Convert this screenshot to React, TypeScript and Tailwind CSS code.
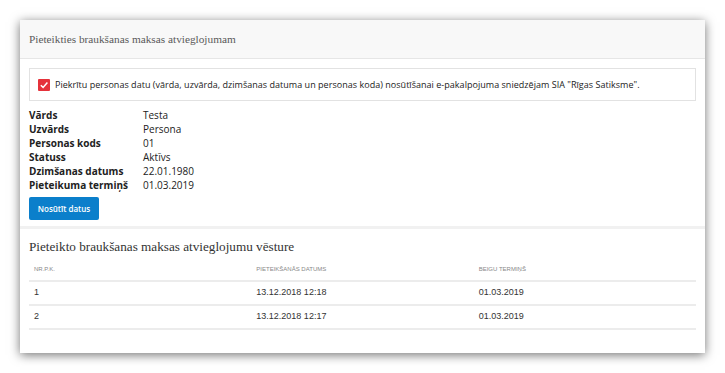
import React from "react";

const info: [string, string][] = [
  ["Vārds", "Testa"],
  ["Uzvārds", "Persona"],
  ["Personas kods", "01"],
  ["Statuss", "Aktīvs"],
  ["Dzimšanas datums", "22.01.1980"],
  ["Pieteikuma termiņš", "01.03.2019"],
];

const rows = [
  ["1", "13.12.2018 12:18", "01.03.2019"],
  ["2", "13.12.2018 12:17", "01.03.2019"],
];

export default function App() {
  return (
    <div className="w-[725px] h-[373px] bg-white p-[20px] overflow-hidden">
      <div className="w-[685px] h-[333px] bg-white shadow-[0_2px_10px_rgba(0,0,0,0.55)] flex flex-col">
        <div className="h-[39px] bg-[#f8f8f8] border-b border-[#e6e6e6] flex items-center pl-[9px]">
          <span className="text-[11.3px] text-[#5a5a5a] font-['Liberation_Serif',serif]">
            Pieteikties braukšanas maksas atvieglojumam
          </span>
        </div>
        <div className="px-[9px] pt-[9px]">
          <div className="h-[33px] border border-[#e2e2e2] flex items-center pl-[8px] gap-[5px]">
            <span className="w-[12px] h-[12px] bg-[#e5323b] rounded-[1px] flex items-center justify-center">
              <svg width="10" height="10" viewBox="0 0 10 10">
                <path d="M1.8 5.2 L4.1 7.4 L8.4 2.6" fill="none" stroke="white" strokeWidth="1.5" />
              </svg>
            </span>
            <span className="text-[9px] tracking-[0.03px] text-[#222] font-['Open_Sans',sans-serif]">
              Piekrītu personas datu (vārda, uzvārda, dzimšanas datuma un personas koda) nosūtīšanai e-pakalpojuma sniedzējam SIA "Rīgas Satiksme".
            </span>
          </div>
          <div className="mt-[7px] font-['Open_Sans',sans-serif] text-[10px] text-[#222]">
            {info.map(([k, v]) => (
              <div key={k} className="flex h-[14px] items-center">
                <span className="w-[114px] font-bold">{k}</span>
                <span>{v}</span>
              </div>
            ))}
          </div>
          <button className="mt-[5px] w-[70px] h-[23px] bg-[#0b7fcb] rounded-[2px] text-white text-[8px] font-semibold font-['Open_Sans',sans-serif]">
            Nosūtīt datus
          </button>
        </div>
        <div className="mt-[6px] h-[3px] bg-[#f1f1f1]" />
        <div className="px-[9px] pt-[8px]">
          <div className="h-[20px] flex items-center text-[13.2px] text-[#333] font-['Liberation_Serif',serif]">
            Pieteikto braukšanas maksas atvieglojumu vēsture
          </div>
          <div className="mt-[2px] font-['Liberation_Sans',sans-serif]">
            <div className="grid grid-cols-3 h-[23px] items-center border-b-2 border-[#ececec] text-[6px] text-[#888] uppercase">
              <span className="pl-[5px]">Nr.p.k.</span>
              <span className="pl-[5px]">Pieteikšanās datums</span>
              <span className="pl-[5px]">Beigu termiņš</span>
            </div>
            {rows.map((r) => (
              <div key={r[0]} className="grid grid-cols-3 h-[24px] items-center border-b-2 border-[#ececec] text-[9px] text-[#333]">
                <span className="pl-[5px]">{r[0]}</span>
                <span className="pl-[5px]">{r[1]}</span>
                <span className="pl-[5px]">{r[2]}</span>
              </div>
            ))}
          </div>
        </div>
      </div>
    </div>
  );
}
